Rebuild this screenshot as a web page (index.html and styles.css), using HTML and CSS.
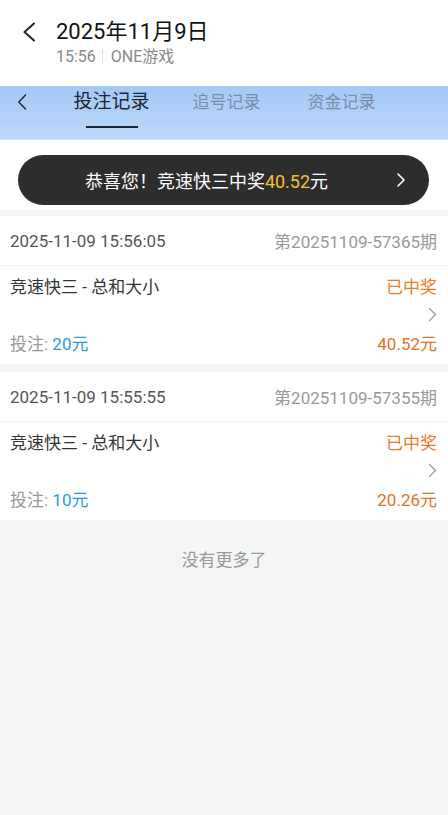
FILE: index.html
```html
<!DOCTYPE html>
<html lang="zh-CN">
<head>
    <meta charset="UTF-8">
    <meta name="viewport" content="width=device-width, initial-scale=1.0">
    <title>投注记录</title>
    <link rel="stylesheet" href="styles.css">
</head>
<body>
    <div class="topbar">
        <svg class="back" width="16" height="20" viewBox="0 0 16 20"><path d="M13 1.5 L3.5 10 L13 18.5" fill="none" stroke="#222" stroke-width="2" stroke-linecap="round" stroke-linejoin="round"/></svg>
        <div class="title-wrap">
            <div class="title">2025年11月9日</div>
            <div class="subtitle">15:56<span class="sep"></span>ONE游戏</div>
        </div>
    </div>

    <div class="tabs">
        <div class="tabs-back">
            <svg width="10" height="16" viewBox="0 0 10 16"><path d="M8.5 1 L1.8 8 L8.5 15" fill="none" stroke="#223" stroke-width="1.4" stroke-linecap="round" stroke-linejoin="round"/></svg>
        </div>
        <div class="tab active">投注记录<span class="line"></span></div>
        <div class="tab">追号记录</div>
        <div class="tab">资金记录</div>
    </div>

    <div class="filter">
        <div class="toast">
            <div class="toast-text">恭喜您！竞速快三中奖<span class="gold">40.52</span>元</div>
            <svg width="12" height="16" viewBox="0 0 12 16"><path d="M3 2 L9 8 L3 14" fill="none" stroke="#fff" stroke-width="1.6" stroke-linecap="round" stroke-linejoin="round"/></svg>
        </div>
    </div>

    <div class="card">
        <div class="card-head">
            <span class="date">2025-11-09 15:56:05</span>
            <span class="period">第20251109-57365期</span>
        </div>
        <div class="card-body">
            <div class="row">
                <span class="game">竞速快三 - 总和大小</span>
                <span class="status">已中奖</span>
            </div>
            <div class="arrow-row">
                <svg width="9" height="15" viewBox="0 0 9 15"><path d="M1.5 1.5 L7.5 7.5 L1.5 13.5" fill="none" stroke="#999" stroke-width="1.3" stroke-linecap="round" stroke-linejoin="round"/></svg>
            </div>
            <div class="row">
                <span class="bet">投注: <span class="blue">20元</span></span>
                <span class="win">40.52元</span>
            </div>
        </div>
    </div>

    <div class="card">
        <div class="card-head">
            <span class="date">2025-11-09 15:55:55</span>
            <span class="period">第20251109-57355期</span>
        </div>
        <div class="card-body">
            <div class="row">
                <span class="game">竞速快三 - 总和大小</span>
                <span class="status">已中奖</span>
            </div>
            <div class="arrow-row">
                <svg width="9" height="15" viewBox="0 0 9 15"><path d="M1.5 1.5 L7.5 7.5 L1.5 13.5" fill="none" stroke="#999" stroke-width="1.3" stroke-linecap="round" stroke-linejoin="round"/></svg>
            </div>
            <div class="row">
                <span class="bet">投注: <span class="blue">10元</span></span>
                <span class="win">20.26元</span>
            </div>
        </div>
    </div>

    <div class="no-more">没有更多了</div>
</body>
</html>
```

FILE: styles.css
```css
html, body {
    margin: 0;
    padding: 0;
}
body {
    width: 448px;
    min-height: 815px;
    background-color: #f4f6f6;
    font-family: Roboto, "Noto Sans CJK SC", sans-serif;
    color: #333;
}
.topbar {
    height: 86px;
    box-sizing: border-box;
    padding: 19px 0 0 21px;
    display: flex;
    align-items: flex-start;
    background-color: #fff;
}
.back {
    margin-top: 3px;
}
.title-wrap {
    margin-left: 19px;
}
.title {
    font-size: 22px;
    line-height: 26px;
    color: #111;
}
.subtitle {
    margin-top: 3px;
    font-size: 16px;
    line-height: 18px;
    color: #8a8a8a;
    display: flex;
    align-items: center;
}
.sep {
    display: inline-block;
    width: 1px;
    height: 14px;
    background-color: #ddd;
    margin: 0 8px 0 6px;
}
.tabs {
    height: 54px;
    box-sizing: border-box;
    padding-top: 5px;
    display: flex;
    align-items: flex-start;
    background: linear-gradient(#a3c9f5, #bcd7fa);
    border-bottom: 1px solid #cfe2fb;
}
.tabs-back {
    width: 54px;
    height: 22px;
    padding-left: 17px;
    box-sizing: border-box;
    display: flex;
    align-items: center;
}
.tab {
    width: 115px;
    text-align: center;
    font-size: 17px;
    line-height: 22px;
    color: #7b8ea6;
    display: flex;
    flex-direction: column;
    align-items: center;
}
.tab.active {
    font-size: 19px;
    color: #1b2633;
}
.line {
    display: block;
    width: 52px;
    height: 2px;
    margin-top: 13px;
    background-color: #1d2a3a;
}
.filter {
    position: relative;
    height: 70px;
    background-color: #fff;
}
.toast {
    position: absolute;
    top: 15px;
    left: 18px;
    right: 19px;
    height: 50px;
    border-radius: 25px;
    background-color: rgba(36, 36, 36, 0.96);
    display: flex;
    align-items: center;
    padding-right: 22px;
}
.toast-text {
    flex: 1;
    text-align: center;
    font-size: 18px;
    color: #fff;
}
.gold {
    color: #f3c136;
}
.card {
    margin-top: 6px;
    background-color: #fff;
}
.card + .card {
    margin-top: 8px;
}
.card-head {
    height: 49px;
    padding: 0 11px 0 10px;
    display: flex;
    align-items: center;
    justify-content: space-between;
    border-bottom: 1px solid #f0f1f2;
    font-size: 17px;
}
.date {
    color: #555;
}
.period {
    color: #999;
}
.card-body {
    padding: 9px 11px 12px 10px;
}
.row {
    display: flex;
    justify-content: space-between;
    align-items: center;
    height: 20px;
    font-size: 17px;
}
.arrow-row {
    height: 24px;
    margin: 7px 0 6px;
    display: flex;
    justify-content: flex-end;
    align-items: center;
}
.game {
    color: #333;
}
.status {
    color: #ee7a2a;
}
.bet {
    color: #999;
}
.blue {
    color: #2a9ade;
}
.win {
    color: #e0741f;
}
.no-more {
    margin-top: 26px;
    text-align: center;
    font-size: 17px;
    color: #999;
}
```
